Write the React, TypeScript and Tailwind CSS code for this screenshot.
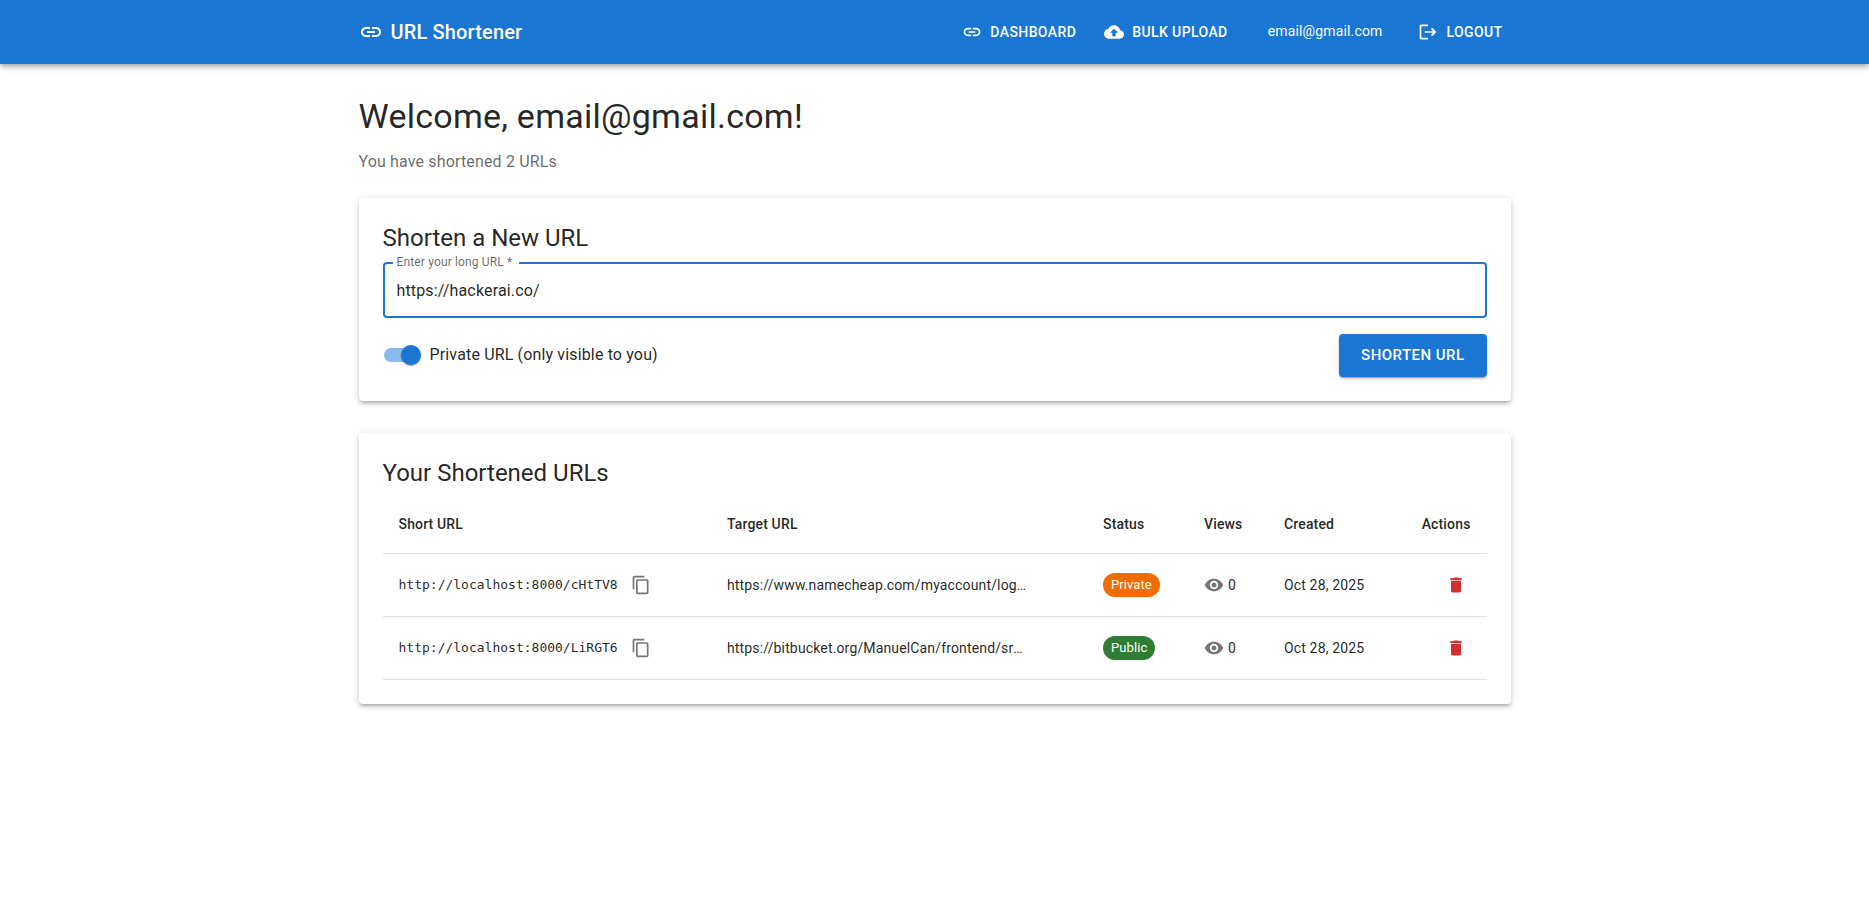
import React from "react";

const P = {
  link: "M3.9 12c0-1.71 1.39-3.1 3.1-3.1h4V7H7c-2.76 0-5 2.24-5 5s2.24 5 5 5h4v-1.9H7c-1.71 0-3.1-1.39-3.1-3.1zM8 13h8v-2H8v2zm9-6h-4v1.9h4c1.71 0 3.1 1.39 3.1 3.1s-1.39 3.1-3.1 3.1h-4V17h4c2.76 0 5-2.24 5-5s-2.24-5-5-5z",
  cloud: "M19.35 10.04C18.67 6.59 15.64 4 12 4 9.11 4 6.6 5.64 5.35 8.04 2.34 8.36 0 10.91 0 14c0 3.31 2.69 6 6 6h13c2.76 0 5-2.24 5-5 0-2.64-2.05-4.78-4.65-4.96zM14 13v4h-4v-4H7l5-5 5 5h-3z",
  logout: "m17 7-1.41 1.41L18.17 11H8v2h10.17l-2.58 2.58L17 17l5-5zM4 5h8V3H4c-1.1 0-2 .9-2 2v14c0 1.1.9 2 2 2h8v-2H4V5z",
  copy: "M16 1H4c-1.1 0-2 .9-2 2v14h2V3h12V1zm3 4H8c-1.1 0-2 .9-2 2v14c0 1.1.9 2 2 2h11c1.1 0 2-.9 2-2V7c0-1.1-.9-2-2-2zm0 16H8V7h11v14z",
  eye: "M12 4.5C7 4.5 2.73 7.61 1 12c1.73 4.39 6 7.5 11 7.5s9.27-3.11 11-7.5c-1.73-4.39-6-7.5-11-7.5zM12 17c-2.76 0-5-2.24-5-5s2.24-5 5-5 5 2.24 5 5-2.24 5-5 5zm0-8c-1.66 0-3 1.34-3 3s1.34 3 3 3 3-1.34 3-3-1.34-3-3-3z",
  trash: "M6 19c0 1.1.9 2 2 2h8c1.1 0 2-.9 2-2V7H6v12zM19 4h-3.5l-1-1h-5l-1 1H5v2h14V4z",
};

function Icon({ d, className }: { d: string; className: string }) {
  return (
    <svg viewBox="0 0 24 24" fill="currentColor" className={className} aria-hidden="true">
      <path d={d} />
    </svg>
  );
}

function NavButton({ d, label }: { d: string; label: string }) {
  return (
    <button className="flex h-[36.5px] items-center rounded px-2 text-sm leading-[1.75] font-medium tracking-[0.4px] text-white uppercase">
      <Icon d={d} className="mr-2 -ml-1 h-5 w-5" />
      {label}
    </button>
  );
}

const cardClass =
  "rounded bg-white p-6 shadow-[0_3px_3px_-2px_rgba(0,0,0,0.2),0_3px_4px_0_rgba(0,0,0,0.14),0_1px_8px_0_rgba(0,0,0,0.12)]";

const rows = [
  {
    short: "http://localhost:8000/cHtTV8",
    target: "https://www.namecheap.com/myaccount/login/?ReturnUrl=%2f",
    status: "Private",
    chip: "bg-[#ef6c00]",
  },
  {
    short: "http://localhost:8000/LiRGT6",
    target: "https://bitbucket.org/ManuelCan/frontend/src/main/index.tsx",
    status: "Public",
    chip: "bg-[#2e7d32]",
  },
];

const thClass = "h-[57px] border-b border-[#e0e0e0] px-4 pb-[2px] text-sm leading-6 font-medium";
const tdClass = "h-[63px] border-b border-[#e0e0e0] px-4 text-sm leading-[20px] font-normal";

export default function App() {
  return (
    <div className="min-h-[918px] bg-white font-['Roboto',sans-serif] tracking-[0.15px] text-[rgba(0,0,0,0.87)]">
      <header className="relative h-16 bg-[#1976d2] text-white shadow-[0_2px_4px_-1px_rgba(0,0,0,0.2),0_4px_5px_0_rgba(0,0,0,0.14),0_1px_10px_0_rgba(0,0,0,0.12)]">
        <div className="mx-auto flex h-16 max-w-[1200px] items-center px-6">
          <Icon d={P.link} className="mr-2 h-6 w-6" />
          <div className="flex-1 text-xl leading-[1.6] font-medium">URL Shortener</div>
          <NavButton d={P.link} label="Dashboard" />
          <div className="ml-4">
            <NavButton d={P.cloud} label="Bulk Upload" />
          </div>
          <div className="mx-8 -translate-y-px text-sm leading-[1.43]">email@gmail.com</div>
          <NavButton d={P.logout} label="Logout" />
        </div>
      </header>

      <main className="mx-auto max-w-[1200px] px-6 pt-8">
        <h1 className="mb-[14px] text-[34px] leading-[40px] font-normal tracking-[0.25px]">Welcome, email@gmail.com!</h1>
        <p className="mb-6 text-base leading-6 text-[rgba(0,0,0,0.6)]">You have shortened 2 URLs</p>

        <section className={cardClass}>
          <h2 className="mb-[8.4px] text-2xl leading-8 font-normal tracking-normal">Shorten a New URL</h2>
          <div className="relative h-14 rounded border-2 border-[#1976d2]">
            <label className="absolute -top-[10px] left-2 bg-white pr-[7px] pl-[4px] text-xs leading-[16px] text-[rgba(0,0,0,0.6)]">
              Enter your long URL *
            </label>
            <input
              readOnly
              value="https://hackerai.co/"
              className="h-full w-full bg-transparent px-3 text-base tracking-[0.15px] text-[rgba(0,0,0,0.87)] outline-none"
            />
          </div>
          <div className="mt-4 flex items-center justify-between">
            <div className="-ml-[11px] flex items-center pb-px">
              <div className="flex h-[38px] w-[58px] items-center justify-center">
                <div className="relative h-[14px] w-[34px] rounded-[7px] bg-[#8cbae8]">
                  <span className="absolute -top-[3px] left-[17px] h-5 w-5 rounded-full bg-[#1976d2] shadow-[0_2px_1px_-1px_rgba(0,0,0,0.2),0_1px_1px_0_rgba(0,0,0,0.14),0_1px_3px_0_rgba(0,0,0,0.12)]" />
                </div>
              </div>
              <span className="text-base leading-6">Private URL (only visible to you)</span>
            </div>
            <button className="h-[42.25px] rounded bg-[#1976d2] px-[22px] text-[15px] font-medium tracking-[0.46px] text-white uppercase shadow-[0_3px_1px_-2px_rgba(0,0,0,0.2),0_2px_2px_0_rgba(0,0,0,0.14),0_1px_5px_0_rgba(0,0,0,0.12)]">
              Shorten URL
            </button>
          </div>
        </section>

        <section className={`mt-8 ${cardClass}`}>
          <h2 className="mb-[8.4px] text-2xl leading-8 font-normal tracking-normal">Your Shortened URLs</h2>
          <table className="w-full table-fixed border-separate border-spacing-0 text-left">
            <colgroup>
              <col className="w-[328.5px]" />
              <col className="w-[376px]" />
              <col className="w-[101px]" />
              <col className="w-[80px]" />
              <col className="w-[137px]" />
              <col className="w-[81.5px]" />
            </colgroup>
            <thead>
              <tr>
                <th className={thClass}>Short URL</th>
                <th className={thClass}>Target URL</th>
                <th className={thClass}>Status</th>
                <th className={thClass}>Views</th>
                <th className={thClass}>Created</th>
                <th className={`${thClass} text-right`}>Actions</th>
              </tr>
            </thead>
            <tbody>
              {rows.map((r) => (
                <tr key={r.short}>
                  <td className={tdClass}>
                    <div className="flex items-center">
                      <span className="font-['DejaVu_Sans_Mono',monospace] text-[13px] tracking-normal whitespace-nowrap">
                        {r.short}
                      </span>
                      <button className="ml-2 flex h-[30px] w-[30px] shrink-0 items-center justify-center text-[#757575]">
                        <Icon d={P.copy} className="h-5 w-5" />
                      </button>
                    </div>
                  </td>
                  <td className={tdClass}>
                    <div className="w-[300px] truncate">{r.target}</div>
                  </td>
                  <td className={tdClass}>
                    <span className={`inline-flex h-6 items-center rounded-2xl px-2 text-[13px] tracking-[0.08px] text-white ${r.chip}`}>
                      {r.status}
                    </span>
                  </td>
                  <td className={tdClass}>
                    <div className="flex items-center">
                      <Icon d={P.eye} className="mr-1 h-5 w-5 text-[#757575]" />
                      0
                    </div>
                  </td>
                  <td className={tdClass}>Oct 28, 2025</td>
                  <td className={`${tdClass} text-right`}>
                    <button className="inline-flex h-[30px] w-[30px] items-center justify-center align-middle text-[#d32f2f]">
                      <Icon d={P.trash} className="h-5 w-5" />
                    </button>
                  </td>
                </tr>
              ))}
            </tbody>
          </table>
        </section>
      </main>
    </div>
  );
}
